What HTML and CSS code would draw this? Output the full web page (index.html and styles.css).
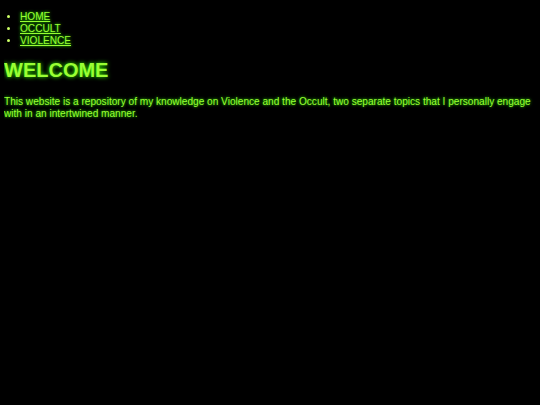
FILE: index.html
```html
<!DOCTYPE html>
<html>
<head>
<meta charset="utf-8">
<link rel="stylesheet" href="styles.css">
</head>
<body class="page">
<ul class="nav">
<li class="nav-item"><a class="nav-link" href="#">HOME</a></li>
<li class="nav-item"><a class="nav-link" href="#">OCCULT</a></li>
<li class="nav-item"><a class="nav-link" href="#">VIOLENCE</a></li>
</ul>
<h1 class="title">WELCOME</h1>
<p class="intro">This website is a repository of my knowledge on Violence and the Occult, two separate topics that I personally engage with in an intertwined manner.</p>
</body>
</html>
```
FILE: styles.css
```css
html { background: #000; }
.page {
  margin: 4px;
  background: #000;
  color: #99ff33;
  font-family: "Liberation Sans", Arial, sans-serif;
  font-size: 10.1px;
  line-height: 12px;
  text-shadow: 0 0 3px #33ff00;
}
.nav {
  margin: 7px 0 0 0;
  padding-left: 16px;
  color: #ccff66;
}
.nav-link {
  color: #99ff33;
}
.title {
  font-size: 20px;
  line-height: 24px;
  margin: 11px 0 0 0;
  color: #99ff33;
  text-shadow: 0 0 4px #33ff00;
}
.intro {
  margin: 14px 0 0 0;
}
```
